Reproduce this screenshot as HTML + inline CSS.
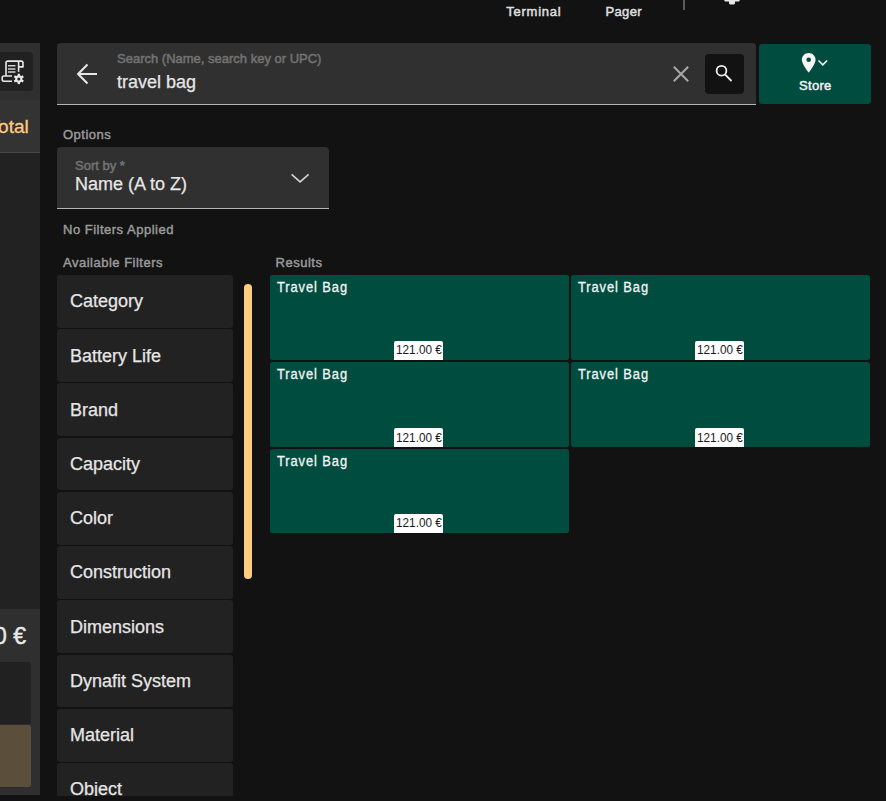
<!DOCTYPE html>
<html><head><meta charset="utf-8">
<style>
*{margin:0;padding:0;box-sizing:border-box}
html,body{width:886px;height:801px;overflow:hidden;background:#121212;font-family:"Liberation Sans",sans-serif;}
.a{position:absolute}
.t{position:absolute;white-space:nowrap;line-height:1}
.m{-webkit-text-stroke:0.25px currentColor}
</style></head><body>
<!-- top bar -->
<div class="t" id="terminal" style="left:506.3px;top:5px;font-size:13px;color:#e0e0e0;letter-spacing:0.75px;-webkit-text-stroke:0.45px #e0e0e0">Terminal</div>
<div class="t" id="pager" style="left:605.5px;top:5px;font-size:13px;color:#e0e0e0;letter-spacing:0.35px;-webkit-text-stroke:0.45px #e0e0e0">Pager</div>
<div class="a" style="left:683px;top:0;width:2px;height:10px;background:#5a5a5a"></div>
<svg class="a" style="left:720px;top:0" width="24" height="8" viewBox="0 0 24 8"><path d="M4 0 H20 L19 1.5 H15 V3.5 L14 4.6 H10 L9 3.5 V1.5 H5 Z" fill="#e6e6e6"/></svg>

<!-- left panel -->
<div class="a" style="left:0;top:43px;width:40px;height:752px;background:#222">
  <div class="a" style="left:0;top:0;width:40px;height:57px;background:#2f2f2f"></div>
  <div class="a" style="left:-10px;top:9px;width:43px;height:39px;background:#212121;border-radius:4px"></div>
  <div class="a" style="left:0;top:57px;width:40px;height:53px;background:#333;border-bottom:1px solid #474747"></div>
  <div class="a" style="left:0;top:565.5px;width:40px;height:186.5px;background:#2f2f2f"></div>
  <div class="a" style="left:-10px;top:619px;width:41px;height:62px;background:#212121;border-radius:2.5px"></div>
  <div class="a" style="left:-10px;top:682px;width:41px;height:61.5px;background:#5b4f3c;border-radius:2.5px"></div>
</div>
<svg class="a" style="left:0;top:50px" width="40" height="45" viewBox="0 50 40 45">
  <g fill="none" stroke="#e8e8e8" stroke-width="1.6">
    <path d="M6 75.8 V62.9 Q6 61.1 7.8 61.1 H21.2 Q23 61.1 23 62.9 V66.9 H18.6" stroke-linejoin="round"/>
    <path d="M18.6 61.8 V71.8"/>
    <path d="M12 76 H3.9 Q2.2 76 2.2 77.7 V79.5 Q2.2 81.2 3.9 81.2 H12"/>
  </g>
  <g stroke="#cfcfcf" stroke-width="1.5">
    <path d="M8 65.8 H15.5 M8 68.9 H15.5 M8 72 H15.5"/>
  </g>
  <g transform="translate(18.8 78.9)">
    <circle r="3.6" fill="#e8e8e8"/>
    <g fill="#e8e8e8">
      <rect x="-1.1" y="-5.2" width="2.2" height="10.4"/>
      <rect x="-1.1" y="-5.2" width="2.2" height="10.4" transform="rotate(60)"/>
      <rect x="-1.1" y="-5.2" width="2.2" height="10.4" transform="rotate(120)"/>
    </g>
    <circle r="1.5" fill="#212121"/>
  </g>
</svg>
<div class="t" style="right:857.3px;top:117.2px;font-size:19px;color:#ffcc80;-webkit-text-stroke:0.3px #ffcc80">Total</div>
<div class="t" style="right:860px;top:624.8px;font-size:23px;color:#e8e8e8;-webkit-text-stroke:0.4px #e8e8e8">0.00 €</div>

<!-- search -->
<div class="a" style="left:57px;top:43px;width:699px;height:62px;background:#303030;border-radius:4px 4px 0 0;border-bottom:1px solid #b4b4b4"></div>
<svg class="a" style="left:74px;top:61px" width="26" height="26" viewBox="0 0 26 26"><path d="M23 13 H4.5 M13.5 3.6 L4.1 13 L13.5 22.4" fill="none" stroke="#e6e6e6" stroke-width="2.1"/></svg>
<div class="t" id="slabel" style="left:117px;top:52px;font-size:13px;color:#737373;-webkit-text-stroke:0.5px #737373">Search (Name, search key or UPC)</div>
<div class="t m" id="sval" style="left:117px;top:73px;font-size:18px;color:#e6e6e6;">travel bag</div>
<svg class="a" style="left:670px;top:63px" width="22" height="22" viewBox="0 0 22 22"><path d="M3.8 3.8 L18.2 18.2 M18.2 3.8 L3.8 18.2" stroke="#a8a8a8" stroke-width="2"/></svg>
<div class="a" style="left:705px;top:54px;width:39px;height:40px;background:#121212;border-radius:4px"></div>
<svg class="a" style="left:705px;top:54px" width="39" height="40" viewBox="0 0 39 40"><circle cx="16.5" cy="16.7" r="4.9" fill="none" stroke="#f0f0f0" stroke-width="1.8"/><path d="M20 20.3 L26.5 27" stroke="#f0f0f0" stroke-width="1.8"/></svg>

<!-- store -->
<div class="a" style="left:759px;top:44px;width:112px;height:60px;background:#004d40;border-radius:3px"></div>
<svg class="a" style="left:800px;top:52px" width="32" height="22" viewBox="0 0 32 22"><path d="M8.7 1 C5 1 1.8 3.9 1.8 7.7 C1.8 11.8 8.7 20.6 8.7 20.6 C8.7 20.6 15.6 11.8 15.6 7.7 C15.6 3.9 12.4 1 8.7 1 Z M8.7 5.4 A2.3 2.3 0 1 1 8.7 10 A2.3 2.3 0 1 1 8.7 5.4 Z" fill="#f4f4f4" fill-rule="evenodd"/><path d="M18.5 8.5 L22.8 12.8 L27.1 8.5" fill="none" stroke="#f4f4f4" stroke-width="1.6"/></svg>
<div class="t" id="store" style="left:799px;top:79px;font-size:13px;color:#f4f4f4;letter-spacing:0.3px;-webkit-text-stroke:0.45px #f4f4f4">Store</div>

<!-- options -->
<div class="t" id="options" style="left:63px;top:127.6px;font-size:13px;color:#9a9a9a;letter-spacing:0.5px;-webkit-text-stroke:0.45px #9a9a9a">Options</div>
<div class="a" style="left:57px;top:147px;width:272px;height:62px;background:#303030;border-radius:4px 4px 0 0;border-bottom:1px solid #b4b4b4"></div>
<div class="t" id="sortby" style="left:75px;top:158.8px;font-size:13px;color:#737373;-webkit-text-stroke:0.5px #737373">Sort by *</div>
<div class="t m" id="sortval" style="left:75px;top:174.8px;font-size:18px;color:#e6e6e6;">Name (A to Z)</div>
<svg class="a" style="left:289px;top:171px" width="22" height="14" viewBox="0 0 22 14"><path d="M2.6 3.3 L11.1 10.9 L19.6 3.3" fill="none" stroke="#d2d2d2" stroke-width="1.6"/></svg>
<div class="t" id="nofilt" style="left:63px;top:223.4px;font-size:13px;color:#9a9a9a;letter-spacing:0.5px;-webkit-text-stroke:0.45px #9a9a9a">No Filters Applied</div>
<div class="t" id="avail" style="left:63px;top:256.4px;font-size:13px;color:#9a9a9a;letter-spacing:0.5px;-webkit-text-stroke:0.45px #9a9a9a">Available Filters</div>
<div class="t" id="results" style="left:275.6px;top:256.4px;font-size:13px;color:#9a9a9a;letter-spacing:0.5px;-webkit-text-stroke:0.45px #9a9a9a">Results</div>

<!-- filters -->
<div class="a" style="left:57px;top:275px;width:176px;height:521px;overflow:hidden" id="filters">
<div class="a" style="left:0;top:0px;width:176px;height:52.7px;background:#222;border-radius:3px"></div>
<div class="t m fname" style="left:13px;top:17.259999999999998px;font-size:18px;color:#e6e6e6">Category</div>
<div class="a" style="left:0;top:54.24px;width:176px;height:52.7px;background:#222;border-radius:3px"></div>
<div class="t m fname" style="left:13px;top:71.50000000000001px;font-size:18px;color:#e6e6e6">Battery Life</div>
<div class="a" style="left:0;top:108.48px;width:176px;height:52.7px;background:#222;border-radius:3px"></div>
<div class="t m fname" style="left:13px;top:125.74000000000002px;font-size:18px;color:#e6e6e6">Brand</div>
<div class="a" style="left:0;top:162.72px;width:176px;height:52.7px;background:#222;border-radius:3px"></div>
<div class="t m fname" style="left:13px;top:179.98px;font-size:18px;color:#e6e6e6">Capacity</div>
<div class="a" style="left:0;top:216.96px;width:176px;height:52.7px;background:#222;border-radius:3px"></div>
<div class="t m fname" style="left:13px;top:234.22px;font-size:18px;color:#e6e6e6">Color</div>
<div class="a" style="left:0;top:271.2px;width:176px;height:52.7px;background:#222;border-radius:3px"></div>
<div class="t m fname" style="left:13px;top:288.46px;font-size:18px;color:#e6e6e6">Construction</div>
<div class="a" style="left:0;top:325.44px;width:176px;height:52.7px;background:#222;border-radius:3px"></div>
<div class="t m fname" style="left:13px;top:342.7px;font-size:18px;color:#e6e6e6">Dimensions</div>
<div class="a" style="left:0;top:379.68px;width:176px;height:52.7px;background:#222;border-radius:3px"></div>
<div class="t m fname" style="left:13px;top:396.94px;font-size:18px;color:#e6e6e6">Dynafit System</div>
<div class="a" style="left:0;top:433.92px;width:176px;height:52.7px;background:#222;border-radius:3px"></div>
<div class="t m fname" style="left:13px;top:451.18px;font-size:18px;color:#e6e6e6">Material</div>
<div class="a" style="left:0;top:488.16px;width:176px;height:52.7px;background:#222;border-radius:3px"></div>
<div class="t m fname" style="left:13px;top:505.4200000000001px;font-size:18px;color:#e6e6e6">Object</div>
</div>
<div class="a" style="left:244px;top:284px;width:8px;height:295px;background:#ffcc80;border-radius:4px"></div>

<!-- results -->
<div id="cards">
<div class="a" style="left:270px;top:275px;width:299px;height:85px;background:#004d40;border-radius:2.5px;overflow:hidden"><div class="t ctitle" style="left:7px;top:5.35px;font-size:14px;color:#f4f4f4;letter-spacing:1px;transform:scaleX(0.92);transform-origin:0 0;-webkit-text-stroke:0.3px #f4f4f4">Travel Bag</div><div class="a" style="left:124px;bottom:0;width:49px;height:19px;background:#fff;border-radius:2px 2px 0 0"></div><div class="t cprice" style="left:125.6px;top:68.2px;font-size:13px;color:#1a1a1a;transform:scaleX(0.905);transform-origin:0 0">121.00 €</div></div>
<div class="a" style="left:571px;top:275px;width:299px;height:85px;background:#004d40;border-radius:2.5px;overflow:hidden"><div class="t ctitle" style="left:7px;top:5.35px;font-size:14px;color:#f4f4f4;letter-spacing:1px;transform:scaleX(0.92);transform-origin:0 0;-webkit-text-stroke:0.3px #f4f4f4">Travel Bag</div><div class="a" style="left:124px;bottom:0;width:49px;height:19px;background:#fff;border-radius:2px 2px 0 0"></div><div class="t cprice" style="left:125.6px;top:68.2px;font-size:13px;color:#1a1a1a;transform:scaleX(0.905);transform-origin:0 0">121.00 €</div></div>
<div class="a" style="left:270px;top:362px;width:299px;height:85.3px;background:#004d40;border-radius:2.5px;overflow:hidden"><div class="t ctitle" style="left:7px;top:5.35px;font-size:14px;color:#f4f4f4;letter-spacing:1px;transform:scaleX(0.92);transform-origin:0 0;-webkit-text-stroke:0.3px #f4f4f4">Travel Bag</div><div class="a" style="left:124px;bottom:0;width:49px;height:19px;background:#fff;border-radius:2px 2px 0 0"></div><div class="t cprice" style="left:125.6px;top:68.5px;font-size:13px;color:#1a1a1a;transform:scaleX(0.905);transform-origin:0 0">121.00 €</div></div>
<div class="a" style="left:571px;top:362px;width:299px;height:85.3px;background:#004d40;border-radius:2.5px;overflow:hidden"><div class="t ctitle" style="left:7px;top:5.35px;font-size:14px;color:#f4f4f4;letter-spacing:1px;transform:scaleX(0.92);transform-origin:0 0;-webkit-text-stroke:0.3px #f4f4f4">Travel Bag</div><div class="a" style="left:124px;bottom:0;width:49px;height:19px;background:#fff;border-radius:2px 2px 0 0"></div><div class="t cprice" style="left:125.6px;top:68.5px;font-size:13px;color:#1a1a1a;transform:scaleX(0.905);transform-origin:0 0">121.00 €</div></div>
<div class="a" style="left:270px;top:448.8px;width:299px;height:84.3px;background:#004d40;border-radius:2.5px;overflow:hidden"><div class="t ctitle" style="left:7px;top:5.35px;font-size:14px;color:#f4f4f4;letter-spacing:1px;transform:scaleX(0.92);transform-origin:0 0;-webkit-text-stroke:0.3px #f4f4f4">Travel Bag</div><div class="a" style="left:124px;bottom:0;width:49px;height:19px;background:#fff;border-radius:2px 2px 0 0"></div><div class="t cprice" style="left:125.6px;top:67.5px;font-size:13px;color:#1a1a1a;transform:scaleX(0.905);transform-origin:0 0">121.00 €</div></div>
</div>

</body></html>
